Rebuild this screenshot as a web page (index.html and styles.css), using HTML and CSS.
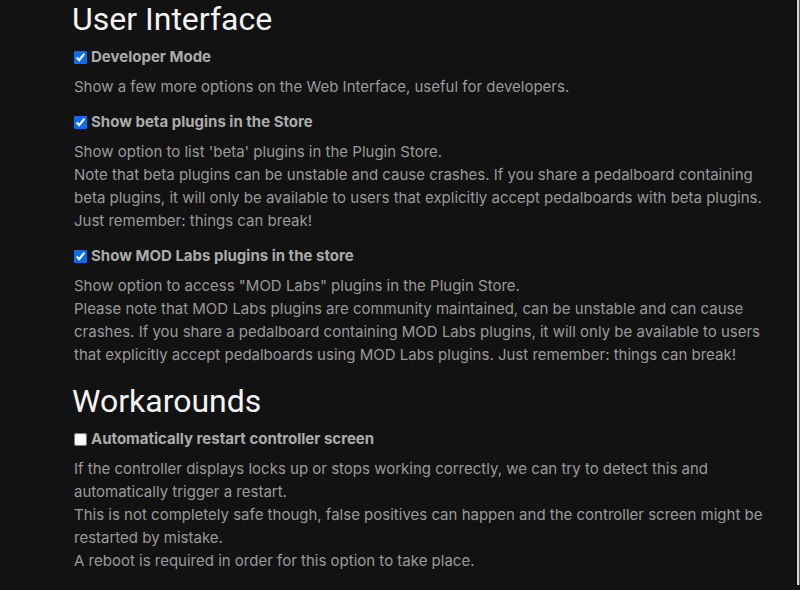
FILE: index.html
```html
<!DOCTYPE html>
<html>
<head>
<meta charset="utf-8">
<link rel="stylesheet" href="styles.css">
</head>
<body>
<div class="frame">
  <div class="page">
    <section class="group">
      <h2 class="group-title">User Interface</h2>
      <div class="option">
        <label class="option-label"><input type="checkbox" checked><span>Developer Mode</span></label>
        <p class="option-desc">Show a few more options on the Web Interface, useful for developers.</p>
      </div>
      <div class="option">
        <label class="option-label"><input type="checkbox" checked><span>Show beta plugins in the Store</span></label>
        <p class="option-desc">Show option to list 'beta' plugins in the Plugin Store.<br>Note that beta plugins can be unstable and cause crashes. If you share a pedalboard containing beta plugins, it will only be available to users that explicitly accept pedalboards with beta plugins.<br>Just remember: things can break!</p>
      </div>
      <div class="option">
        <label class="option-label"><input type="checkbox" checked><span>Show MOD Labs plugins in the store</span></label>
        <p class="option-desc">Show option to access "MOD Labs" plugins in the Plugin Store.<br>Please note that MOD Labs plugins are community maintained, can be unstable and can cause crashes. If you share a pedalboard containing MOD Labs plugins, it will only be available to users that explicitly accept pedalboards using MOD Labs plugins. Just remember: things can break!</p>
      </div>
    </section>
    <section class="group">
      <h2 class="group-title">Workarounds</h2>
      <div class="option">
        <label class="option-label"><input type="checkbox"><span>Automatically restart controller screen</span></label>
        <p class="option-desc">If the controller displays locks up or stops working correctly, we can try to detect this and automatically trigger a restart.<br>This is not completely safe though, false positives can happen and the controller screen might be restarted by mistake.<br>A reboot is required in order for this option to take place.</p>
      </div>
    </section>
  </div>
</div>
</body>
</html>
```
FILE: styles.css
```css
html, body {
  margin: 0;
  padding: 0;
  background: #121212;
  height: 100%;
  overflow: hidden;
}
.frame {
  width: 800px;
  height: 585px;
  border-right: 1px solid #5a5a5a;
  box-shadow: inset -2px 0 0 #d8d8d8;
  box-sizing: border-box;
  background: #121212;
  overflow: hidden;
}
.page {
  padding-left: 74px;
  width: 700px;
  font-family: Inter, "Noto Sans", sans-serif;
  color: #9a9a9a;
}
.group-title {
  margin: -3px 0 5px -2px;
  font-family: Roboto, Inter, sans-serif;
  font-size: 32px;
  font-weight: 400;
  line-height: 44px;
  color: #f4f4f4;
}
.group + .group .group-title {
  margin-top: 1px;
}
.option-label {
  display: flex;
  align-items: center;
  gap: 4px;
  font-size: 15px;
  font-weight: 700;
  color: #ababab;
  line-height: 22px;
  margin-top: 2px;
}
.option-label input {
  margin: 0;
  width: 13px;
  height: 13px;
  accent-color: #0b6cf2;
}
.option-desc {
  margin: 7px 0 13px;
  font-size: 15px;
  line-height: 23px;
}
```
